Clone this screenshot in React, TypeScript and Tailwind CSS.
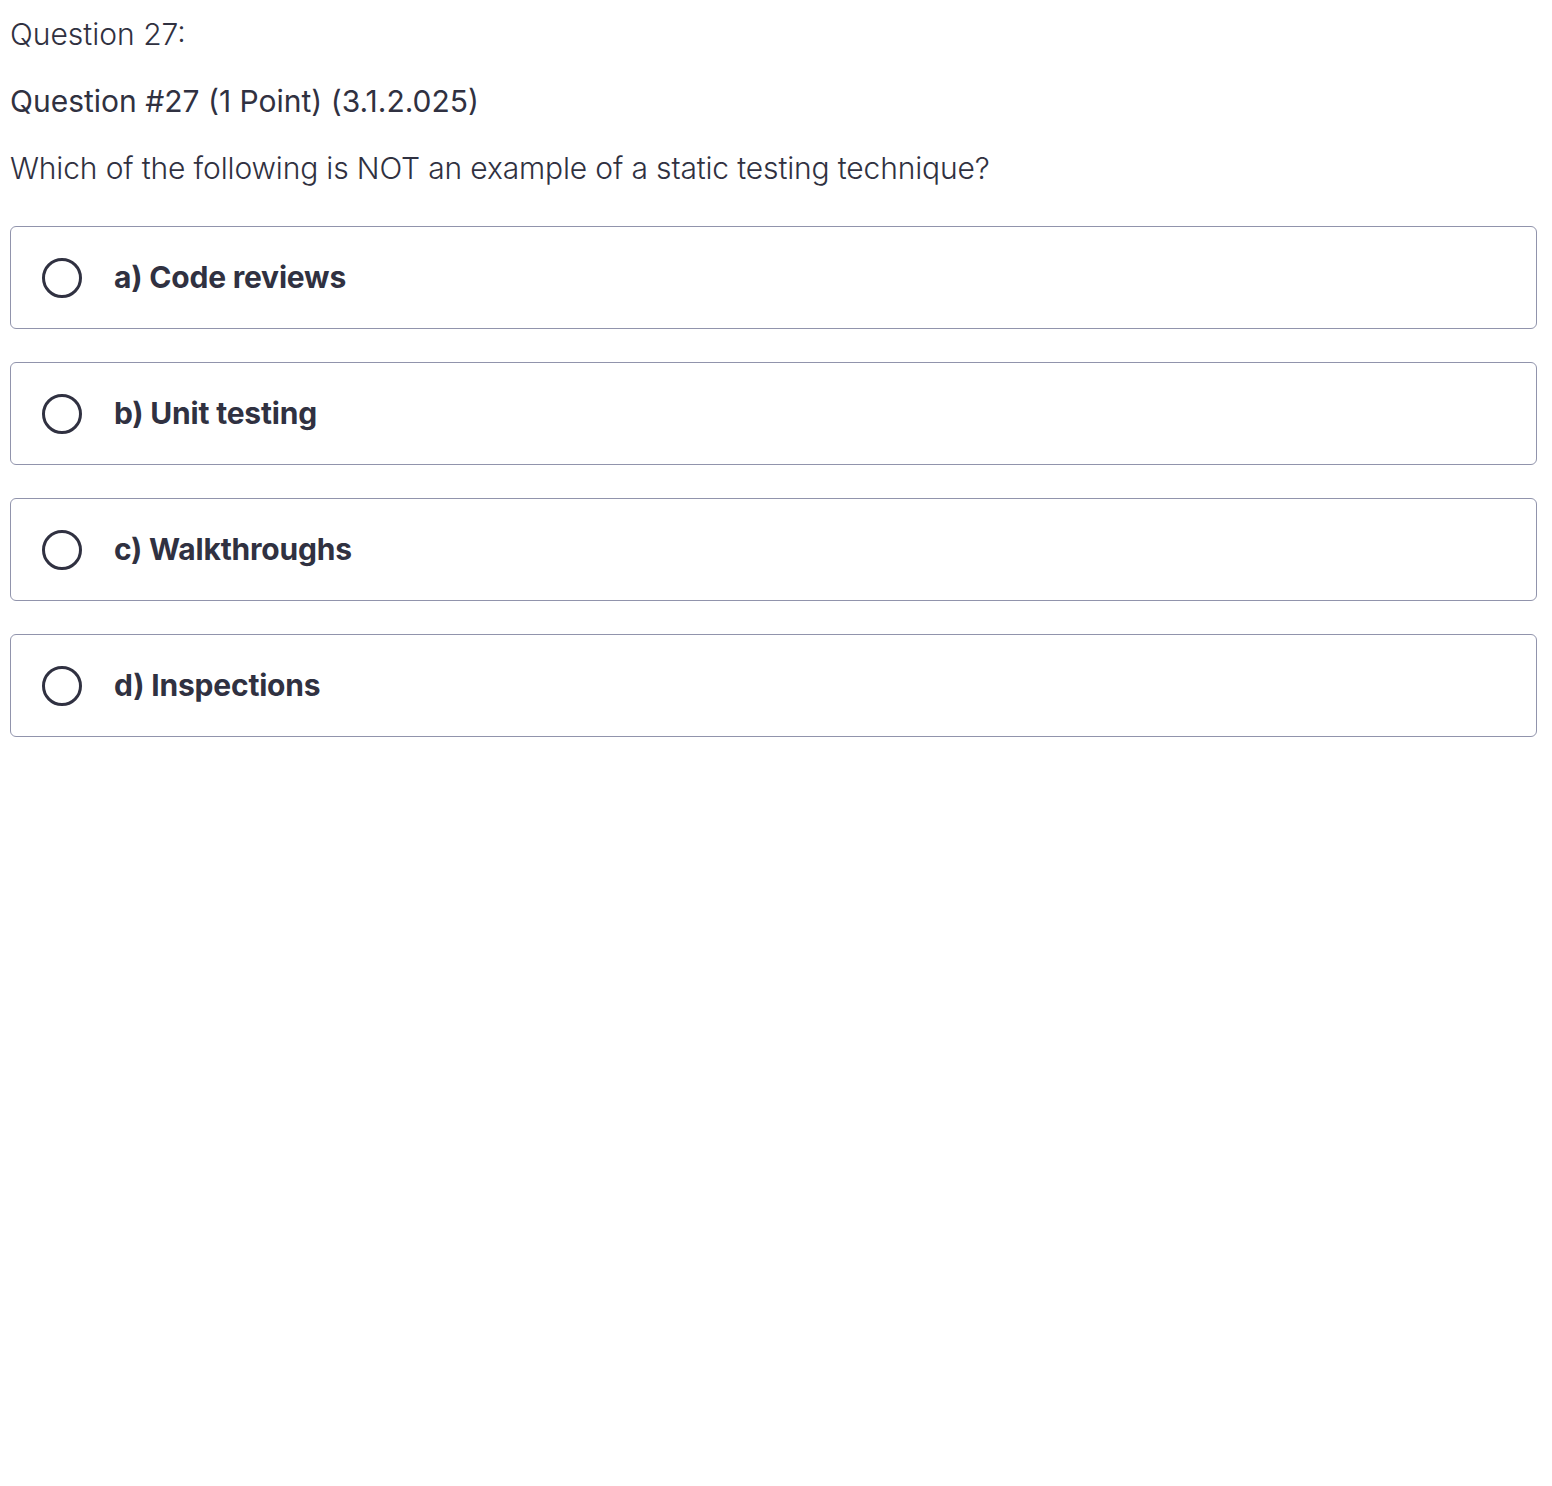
const options = ["a) Code reviews", "b) Unit testing", "c) Walkthroughs", "d) Inspections"];

function Radio() {
  return (
    <span className="w-[40px] h-[40px] rounded-full border-[3px] border-[#303141] shrink-0" />
  );
}

export default function App() {
  return (
    <div
      className="min-h-[1486px] bg-white px-[10px] pt-[14px] text-[#303141]"
      style={{ fontFamily: "Inter, 'Noto Sans', sans-serif" }}
    >
      <div className="text-[30px] leading-[40px] font-light">Question 27:</div>
      <div className="mt-[27px] text-[30px] leading-[40px] font-normal">
        Question #27 (1 Point) (3.1.2.025)
      </div>
      <div className="mt-[27px] text-[30px] leading-[40px] font-light tracking-[-0.15px]">
        Which of the following is NOT an example of a static testing technique?
      </div>
      <div className="mt-[38px] flex flex-col gap-[33px] w-[1527px]">
        {options.map((o) => (
          <div
            key={o}
            className="flex items-center gap-[32px] h-[103px] px-[31px] rounded-[6px] border-[1.5px] border-[#9194ac]"
          >
            <Radio />
            <span className="text-[30px] font-bold tracking-[-0.2px]">{o}</span>
          </div>
        ))}
      </div>
    </div>
  );
}
